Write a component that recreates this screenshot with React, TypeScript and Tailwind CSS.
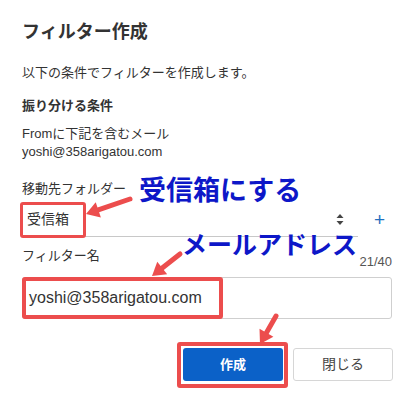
import React from "react";

const jp = { fontFamily: '"Liberation Sans", "Noto Sans CJK JP", sans-serif' };

function Arrow({ x1, y1, x2, y2 }: { x1: number; y1: number; x2: number; y2: number }) {
  const ang = Math.atan2(y2 - y1, x2 - x1);
  const hl = 13;
  const hw = 8;
  const bx = x2 - hl * Math.cos(ang);
  const by = y2 - hl * Math.sin(ang);
  const px = -Math.sin(ang);
  const py = Math.cos(ang);
  const pts = `${x2},${y2} ${bx + px * hw},${by + py * hw} ${bx - px * hw},${by - py * hw}`;
  return (
    <g>
      <line x1={x1} y1={y1} x2={bx} y2={by} stroke="#ec4d4d" strokeWidth={5} strokeLinecap="round" />
      <polygon points={pts} fill="#ec4d4d" />
    </g>
  );
}

export default function App() {
  return (
    <div className="relative w-[416px] h-[402px] bg-white overflow-hidden text-[#333]" style={jp}>
      <div className="flex flex-col pl-[22px] pr-[24px] pt-[22px]">
        <div className="text-[18px] font-bold leading-[21px] text-[#333]">フィルター作成</div>
        <div className="mt-[21px] text-[13px] leading-[18px]">以下の条件でフィルターを作成します。</div>
        <div className="mt-[15px] text-[13px] leading-[18px] font-bold">振り分ける条件</div>
        <div className="mt-[10px] text-[13px] leading-[18px]">Fromに下記を含むメール</div>
        <div className="text-[13px] leading-[18px]">yoshi@358arigatou.com</div>
        <div className="mt-[19px] text-[13px] leading-[18px]">移動先フォルダー</div>
        <div className="flex items-center mt-[4px]">
          <div className="flex items-center w-[336px] h-[35px] border-b border-[#c8c8c8] pl-[5px] pr-[14px]">
            <span className="flex-1 text-[14px]">受信箱</span>
            <svg width="8" height="13" viewBox="0 0 8 13">
              <polygon points="4,1 7.5,5 0.5,5" fill="#444" />
              <polygon points="4,12 7.5,8 0.5,8" fill="#444" />
            </svg>
          </div>
          <span className="ml-[16px] text-[#1f6fbf] text-[19px] leading-[20px] font-normal">+</span>
        </div>
        <div className="flex items-end justify-between mt-[10px]">
          <span className="text-[13px] leading-[18px]">フィルター名</span>
          <span className="text-[13px] leading-[14px] text-[#555] translate-y-[4px]">21/40</span>
        </div>
        <div className="mt-[12px] h-[42px] w-[370px] border border-[#cfcfcf] rounded-[3px] flex items-center pl-[6px] text-[16px]">
          yoshi@358arigatou.com
        </div>
        <div className="flex justify-end gap-[10px] mt-[29px]">
          <button className="w-[100px] h-[33px] rounded-[3px] bg-[#0b61c8] text-white text-[13px] font-bold">作成</button>
          <button className="w-[100px] h-[33px] rounded-[3px] bg-white border border-[#d6d6d6] text-[#444] text-[14px] mr-[-1px]">閉じる</button>
        </div>
      </div>

      {/* annotations */}
      <div className="absolute left-[20px] top-[202px] w-[66px] h-[36px] border-[3px] border-[#ec4d4d] rounded-[3px]" />
      <div className="absolute left-[22px] top-[277px] w-[201px] h-[42px] border-[4px] border-[#ec4d4d] rounded-[3px]" />
      <div className="absolute left-[177px] top-[342px] w-[111px] h-[46px] border-[4px] border-[#ec4d4d] rounded-[3px]" />

      <div className="absolute left-[139px] top-[172px] text-[27px] leading-[34px] font-bold text-[#0d17c8]" style={{ fontFamily: '"Noto Sans CJK JP", sans-serif' }}>受信箱にする</div>
      <div className="absolute left-[182px] top-[227px] text-[25px] leading-[32px] font-bold text-[#0d17c8]" style={{ fontFamily: '"Noto Sans CJK JP", sans-serif' }}>メールアドレス</div>

      <svg className="absolute left-0 top-0" width="416" height="402">
        <Arrow x1={130} y1={199} x2={86} y2={214} />
        <Arrow x1={180} y1={254} x2={152} y2={276} />
        <Arrow x1={276} y1={316} x2={260} y2={344} />
      </svg>
    </div>
  );
}
